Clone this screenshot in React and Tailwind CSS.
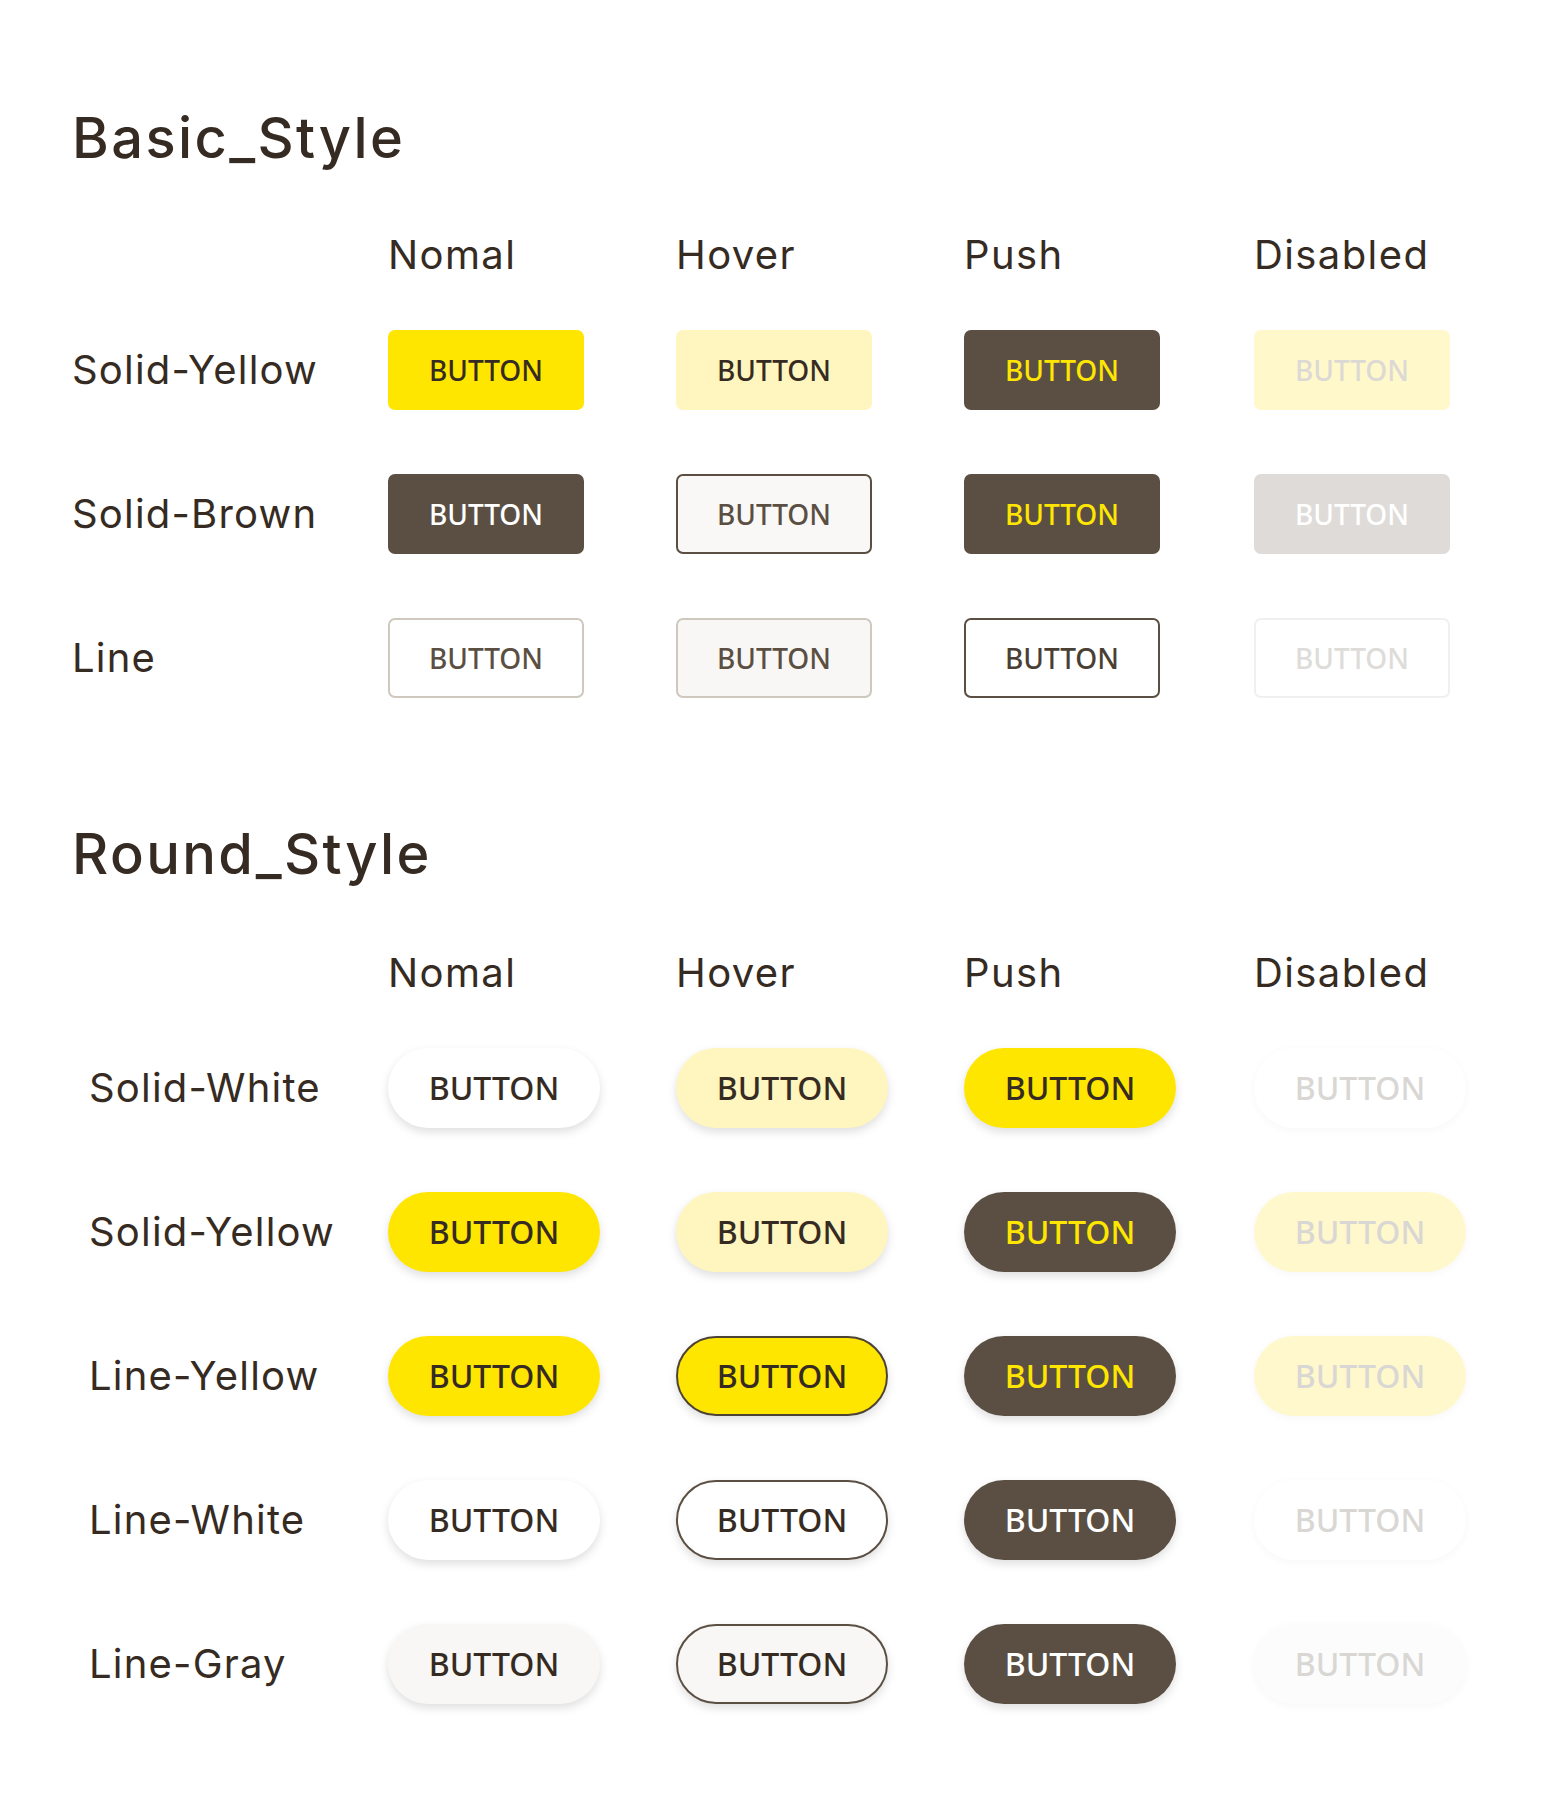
import React from 'react';

const COLS = ['Nomal', 'Hover', 'Push', 'Disabled'];

// basic (square-ish) buttons
const BASIC = [
  {
    label: 'Solid-Yellow',
    btns: [
      'bg-[#ffe600] text-[#362b22]',
      'bg-[#fff5be] text-[#362b22]',
      'bg-[#5b4f43] text-[#ffe600]',
      'bg-[#fff8cb] text-[#dcd9d5]',
    ],
  },
  {
    label: 'Solid-Brown',
    btns: [
      'bg-[#5b4f43] text-white',
      'bg-[#f9f8f6] border-2 border-[#5b4f43] text-[#5b4f43]',
      'bg-[#5b4f43] text-[#ffe600]',
      'bg-[#dfdbd8] text-white',
    ],
  },
  {
    label: 'Line',
    btns: [
      'bg-white border-2 border-[#cfc8be] text-[#5b4f43]',
      'bg-[#f8f7f5] border-2 border-[#cfc8be] text-[#5b4f43]',
      'bg-white border-2 border-[#5b4f43] text-[#4a3f35]',
      'bg-white border-2 border-[#f1f0ef] text-[#dedcd9]',
    ],
  },
];

const SHADOW = 'shadow-[0_4px_10px_rgba(0,0,0,0.13)]';
const SHADOW_OFF = 'shadow-[0_2px_8px_rgba(0,0,0,0.035)]';

const ROUND = [
  {
    label: 'Solid-White',
    btns: [
      `bg-white text-[#362b22] ${SHADOW}`,
      `bg-[#fff5be] text-[#362b22] ${SHADOW}`,
      `bg-[#ffe600] text-[#362b22] ${SHADOW}`,
      `bg-white text-[#d9d7d4] ${SHADOW_OFF}`,
    ],
  },
  {
    label: 'Solid-Yellow',
    btns: [
      `bg-[#ffe600] text-[#362b22] ${SHADOW}`,
      `bg-[#fff5be] text-[#362b22] ${SHADOW}`,
      `bg-[#5b4f43] text-[#ffe600] ${SHADOW}`,
      `bg-[#fff8cc] text-[#d9d7d4] ${SHADOW_OFF}`,
    ],
  },
  {
    label: 'Line-Yellow',
    btns: [
      `bg-[#ffe600] text-[#362b22] ${SHADOW}`,
      `bg-[#ffe600] border-2 border-[#4d4236] text-[#362b22] ${SHADOW}`,
      `bg-[#5b4f43] text-[#ffe600] ${SHADOW}`,
      `bg-[#fff8cc] text-[#d9d7d4] ${SHADOW_OFF}`,
    ],
  },
  {
    label: 'Line-White',
    btns: [
      `bg-white text-[#362b22] ${SHADOW}`,
      `bg-white border-2 border-[#5b4f43] text-[#362b22] ${SHADOW}`,
      `bg-[#5b4f43] text-white ${SHADOW}`,
      `bg-white text-[#d9d7d4] ${SHADOW_OFF}`,
    ],
  },
  {
    label: 'Line-Gray',
    btns: [
      `bg-[#f8f7f5] text-[#362b22] ${SHADOW}`,
      `bg-[#f8f7f5] border-2 border-[#5b4f43] text-[#362b22] ${SHADOW}`,
      `bg-[#5b4f43] text-white ${SHADOW}`,
      `bg-[#fcfcfc] text-[#d9d7d4] ${SHADOW_OFF}`,
    ],
  },
];

const GRID = 'grid grid-cols-[316px_288px_288px_290px_288px]';
const LABEL_FONT = "font-['Inter','Noto_Sans',sans-serif]";
const BTN_FONT = "font-['Noto_Sans','Open_Sans',sans-serif]";

function HeaderRow() {
  return (
    <div className={`${GRID} h-[86px] items-center`}>
      <div />
      {COLS.map((c) => (
        <div key={c} className={`${LABEL_FONT} text-[40px] leading-none text-[#362b22] tracking-[0.035em]`}>
          {c}
        </div>
      ))}
    </div>
  );
}

function Section({ title, rows, round, mt }) {
  return (
    <section className={mt}>
      <h2 className={`${LABEL_FONT} h-[56px] text-[56px] leading-none font-medium text-[#362b22] tracking-[0.043em]`}>
        {title}
      </h2>
      <div className={round ? 'mt-[48px]' : 'mt-[46px]'}>
        <HeaderRow />
        {rows.map((r) => (
          <div key={r.label} className={`${GRID} h-[144px] items-center`}>
            <div className={`${LABEL_FONT} text-[40px] leading-none text-[#362b22] tracking-[0.03em] ${round ? 'pl-[17px]' : ''}`}>
              {r.label}
            </div>
            {r.btns.map((b, i) => (
              <div key={i}>
                <div
                  className={`${BTN_FONT} flex items-center justify-center h-[80px] font-medium leading-none ${
                    round ? 'w-[212px] rounded-full text-[32px]' : 'w-[196px] rounded-[7px] text-[28px]'
                  } ${b}`}
                >
                  BUTTON
                </div>
              </div>
            ))}
          </div>
        ))}
      </div>
    </section>
  );
}

export default function App() {
  return (
    <div className="min-h-[1804px] w-[1560px] bg-white pl-[72px] pt-[110px]">
      <Section title="Basic_Style" rows={BASIC} />
      <Section title="Round_Style" rows={ROUND} round mt="mt-[96px]" />
    </div>
  );
}
